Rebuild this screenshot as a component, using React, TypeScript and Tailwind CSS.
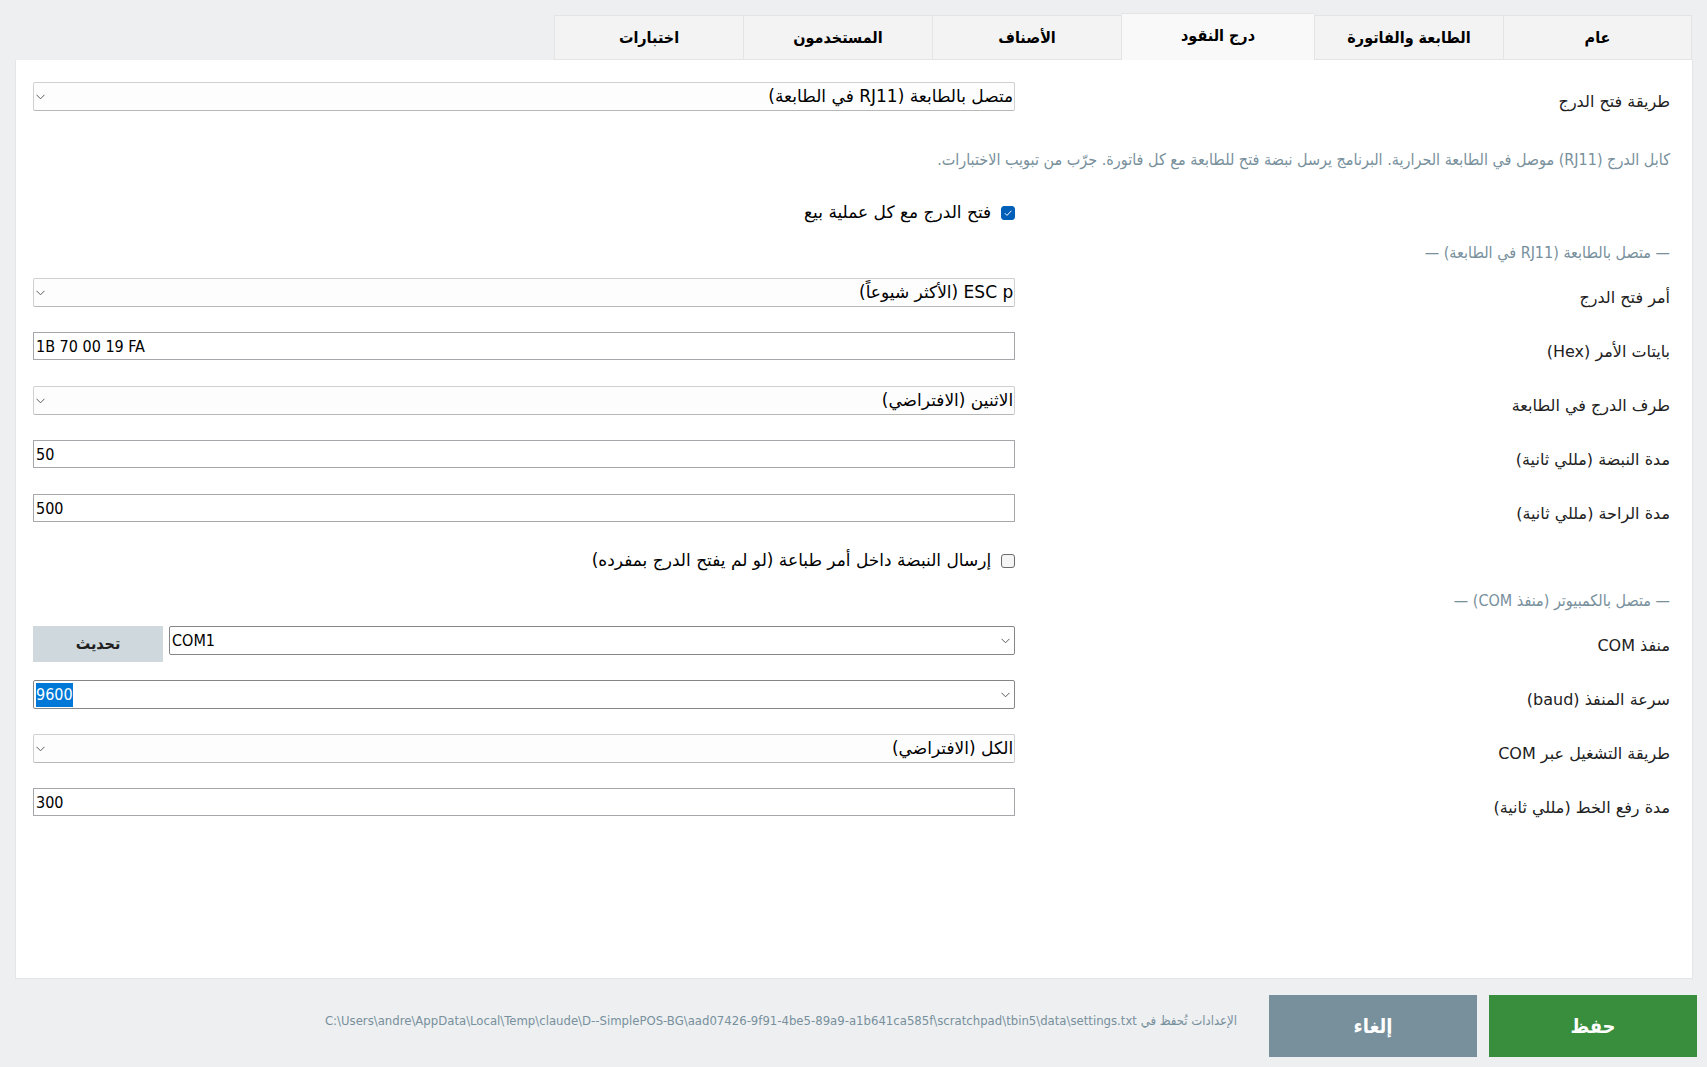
import { useEffect, useRef, useState } from 'react';
import type { ReactNode } from 'react';
import clsx from 'clsx';

const TABS = ['عام', 'الطابعة والفاتورة', 'درج النقود', 'الأصناف', 'المستخدمون', 'اختبارات'];

function Chevron() {
  return (
    <svg viewBox="0 0 9 6" className="h-[6px] w-[9px]" fill="none" stroke="#5c5c5c" aria-hidden="true">
      <path d="M0.5 0.8 4.5 4.8 8.5 0.8" />
    </svg>
  );
}

interface RowProps {
  id: string;
  label: string;
  children: ReactNode;
}

function Row({ id, label, children }: RowProps) {
  return (
    <div className="grid h-[54px] grid-cols-[2fr_3fr] items-start">
      <label htmlFor={id} className="font-['DejaVu_Sans',sans-serif] leading-10 text-[#212121]">
        {label}
      </label>
      {children}
    </div>
  );
}

function SelectBox({ id, options }: { id: string; options: string[] }) {
  return (
    <div className="relative">
      <select
        id={id}
        className="block h-[29px] w-full appearance-none rounded-xs border border-[#d0d0d0] border-b-[#b8b8b8] bg-[#fdfdfd] ps-px pe-6 font-['DejaVu_Sans',sans-serif] text-[17px] text-black outline-none"
      >
        {options.map((option) => (
          <option key={option}>{option}</option>
        ))}
      </select>
      <span className="pointer-events-none absolute inset-y-0 left-[3px] flex items-center">
        <Chevron />
      </span>
    </div>
  );
}

function TextBox({ id, value }: { id: string; value: string }) {
  return (
    <input
      id={id}
      type="text"
      dir="ltr"
      defaultValue={value}
      className="block h-[28px] w-full border border-[#a5a7aa] bg-white px-[2px] text-black outline-none"
    />
  );
}

// Editable combo: free text plus a drop button on the right
function ComboBox({ id, value, selected = false }: { id: string; value: string; selected?: boolean }) {
  const ref = useRef<HTMLInputElement>(null);

  useEffect(() => {
    if (selected) {
      ref.current?.focus();
      ref.current?.select();
    }
  }, [selected]);

  return (
    <div dir="ltr" className="flex h-[29px] min-w-0 flex-1 rounded-xs border border-[#868689] bg-white">
      <input
        ref={ref}
        id={id}
        type="text"
        defaultValue={value}
        className="min-w-0 flex-1 bg-transparent px-[2px] text-black outline-none selection:bg-[#0078d7] selection:text-white"
      />
      <button type="button" aria-label="فتح القائمة" className="flex w-[17px] items-center justify-center">
        <Chevron />
      </button>
    </div>
  );
}

function CheckRow({ label, defaultChecked = false }: { label: string; defaultChecked?: boolean }) {
  const [checked, setChecked] = useState(defaultChecked);

  return (
    <div className="grid h-10 grid-cols-[2fr_3fr] items-start">
      <label className="col-start-2 flex h-[26px] items-center gap-[10px] font-['DejaVu_Sans',sans-serif] text-[17px] text-black">
        <span className="relative flex size-[14px] shrink-0">
          <input
            type="checkbox"
            checked={checked}
            onChange={(e) => setChecked(e.target.checked)}
            className="size-[14px] appearance-none rounded-[3px] border border-[#6b6b6b] bg-[#f5f5f5] checked:border-[#005fb8] checked:bg-[#005fb8]"
          />
          {checked && (
            <svg
              viewBox="0 0 14 14"
              className="pointer-events-none absolute inset-0"
              fill="none"
              stroke="#ffffff"
              aria-hidden="true"
            >
              <path d="M3.8 7.2 6 9.4 10.4 4.8" />
            </svg>
          )}
        </span>
        {label}
      </label>
    </div>
  );
}

function SectionTitle({ children }: { children: ReactNode }) {
  return <h2 className="h-[38px] leading-[26px] text-[#78909c]">{children}</h2>;
}

export default function App() {
  const [active, setActive] = useState(2);

  return (
    <div
      dir="rtl"
      className="flex min-h-screen flex-col bg-[#edeff1] pt-[13px] font-['DejaVu_Sans_Condensed','DejaVu_Sans',sans-serif] text-[16px]"
    >
      {/* Tabs */}
      <div role="tablist" className="flex items-end pr-[15px]">
        {TABS.map((tab, i) => (
          <button
            key={tab}
            type="button"
            role="tab"
            aria-selected={active === i}
            onClick={() => setActive(i)}
            className={clsx(
              'border-t border-l border-[#e3e4e5] text-[16px] font-bold text-black first:border-r',
              active === i ? 'h-[47px] w-[193px] bg-[#f9f9f9] pb-[2px]' : 'h-[45px] w-[189px] border-b bg-[#f3f3f3]',
            )}
          >
            {tab}
          </button>
        ))}
      </div>

      {/* Cash drawer page */}
      <main className="mr-[14px] ml-[15px] flex-1 border border-t-0 border-[#e3e6e8] bg-white pt-[22px] pr-[22px] pl-[17px]">
        <Row id="open-method" label="طريقة فتح الدرج">
          <SelectBox id="open-method" options={['متصل بالطابعة (RJ11 في الطابعة)']} />
        </Row>
        <p className="h-16 pt-3 leading-[24px] text-[#78909c]">
          كابل الدرج (RJ11) موصل في الطابعة الحرارية. البرنامج يرسل نبضة فتح للطابعة مع كل فاتورة. جرّب من تبويب
          الاختبارات.
        </p>
        <CheckRow label="فتح الدرج مع كل عملية بيع" defaultChecked />

        <SectionTitle>— متصل بالطابعة (RJ11 في الطابعة) —</SectionTitle>
        <Row id="open-command" label="أمر فتح الدرج">
          <SelectBox id="open-command" options={['ESC p (الأكثر شيوعاً)']} />
        </Row>
        <Row id="command-bytes" label="بايتات الأمر (Hex)">
          <TextBox id="command-bytes" value="1B 70 00 19 FA" />
        </Row>
        <Row id="drawer-pin" label="طرف الدرج في الطابعة">
          <SelectBox id="drawer-pin" options={['الاثنين (الافتراضي)']} />
        </Row>
        <Row id="pulse-on" label="مدة النبضة (مللي ثانية)">
          <TextBox id="pulse-on" value="50" />
        </Row>
        <Row id="pulse-off" label="مدة الراحة (مللي ثانية)">
          <TextBox id="pulse-off" value="500" />
        </Row>
        <CheckRow label="إرسال النبضة داخل أمر طباعة (لو لم يفتح الدرج بمفرده)" />

        <SectionTitle>— متصل بالكمبيوتر (منفذ COM) —</SectionTitle>
        <Row id="com-port" label="منفذ COM">
          <div className="flex items-start gap-[6px]">
            <ComboBox id="com-port" value="COM1" />
            <button type="button" className="h-9 w-[130px] bg-[#cfd8dc] text-[16px] font-bold text-[#212121]">
              تحديث
            </button>
          </div>
        </Row>
        <Row id="baud" label="سرعة المنفذ (baud)">
          <ComboBox id="baud" value="9600" selected />
        </Row>
        <Row id="com-mode" label="طريقة التشغيل عبر COM">
          <SelectBox id="com-mode" options={['الكل (الافتراضي)']} />
        </Row>
        <Row id="line-hold" label="مدة رفع الخط (مللي ثانية)">
          <TextBox id="line-hold" value="300" />
        </Row>
      </main>

      {/* Footer */}
      <footer className="flex items-start gap-3 px-[10px] pt-4 pb-[10px]">
        <button type="button" className="h-[62px] w-[208px] bg-[#388e3c] text-[20px] font-bold text-white">
          حفظ
        </button>
        <button type="button" className="h-[62px] w-[208px] bg-[#78909c] text-[20px] font-bold text-white">
          إلغاء
        </button>
        <p className="ps-5 text-[13px] leading-[52px] text-[#78909c]">
          الإعدادات تُحفظ في{' '}
          <bdi dir="ltr">
            {'C:\\Users\\andre\\AppData\\Local\\Temp\\claude\\D--SimplePOS-BG\\aad07426-9f91-4be5-89a9-a1b641ca585f\\scratchpad\\tbin5\\data\\settings.txt'}
          </bdi>
        </p>
      </footer>
    </div>
  );
}
